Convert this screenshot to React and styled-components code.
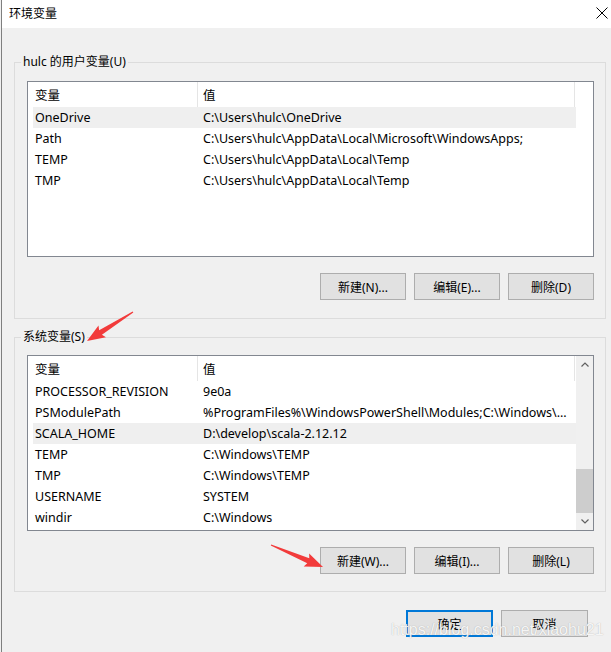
import styled, { createGlobalStyle } from "styled-components";

const GlobalStyle = createGlobalStyle`
  html, body {
    margin: 0;
    padding: 0;
    background: #f0f0f0;
  }
  body {
    font-family: "Noto Sans", "Noto Sans CJK SC", sans-serif;
    font-size: 12.5px;
    color: #000;
  }
  * {
    box-sizing: border-box;
  }
`;

// 用户变量
const userVars = [
  { name: "OneDrive", value: "C:\\Users\\hulc\\OneDrive", selected: true },
  { name: "Path", value: "C:\\Users\\hulc\\AppData\\Local\\Microsoft\\WindowsApps;" },
  { name: "TEMP", value: "C:\\Users\\hulc\\AppData\\Local\\Temp" },
  { name: "TMP", value: "C:\\Users\\hulc\\AppData\\Local\\Temp" },
];

// 系统变量
const systemVars = [
  { name: "PROCESSOR_REVISION", value: "9e0a" },
  { name: "PSModulePath", value: "%ProgramFiles%\\WindowsPowerShell\\Modules;C:\\Windows\\..." },
  { name: "SCALA_HOME", value: "D:\\develop\\scala-2.12.12", selected: true },
  { name: "TEMP", value: "C:\\Windows\\TEMP" },
  { name: "TMP", value: "C:\\Windows\\TEMP" },
  { name: "USERNAME", value: "SYSTEM" },
  { name: "windir", value: "C:\\Windows" },
];

// 红色箭头 (tail -> tip)
const arrowShape = (x1, y1, x2, y2) => {
  const dx = x2 - x1;
  const dy = y2 - y1;
  const len = Math.sqrt(dx * dx + dy * dy);
  const deg = (Math.atan2(dy, dx) * 180) / Math.PI;
  const points = `0,-0.6 ${len - 16},-2.6 ${len - 18},-7 ${len},0 ${len - 18},7 ${len - 16},2.6 0,0.6`;
  return { points, transform: `translate(${x1} ${y1}) rotate(${deg})` };
};

const VarList = ({ rows, scroll }) => (
  <ListView>
    <ListContent>
      <HeaderRow>
        <HeaderCell>变量</HeaderCell>
        <HeaderCell $value>值</HeaderCell>
      </HeaderRow>
      {rows.map((r) => (
        <Row key={r.name} $selected={r.selected}>
          <Cell>{r.name}</Cell>
          <Cell $value>{r.value}</Cell>
        </Row>
      ))}
    </ListContent>
    {scroll ? (
      <Scrollbar>
        <ScrollButton>
          <svg width="8" height="5" viewBox="0 0 8 5">
            <polyline points="0.5,4.5 4,1 7.5,4.5" fill="none" stroke="#606060" strokeWidth="1.2" />
          </svg>
        </ScrollButton>
        <Track>
          <Thumb />
        </Track>
        <ScrollButton>
          <svg width="8" height="5" viewBox="0 0 8 5">
            <polyline points="0.5,0.5 4,4 7.5,0.5" fill="none" stroke="#606060" strokeWidth="1.2" />
          </svg>
        </ScrollButton>
      </Scrollbar>
    ) : (
      <ScrollSpace />
    )}
  </ListView>
);

const App = () => {
  const a1 = arrowShape(133, 312, 87, 341);
  const a2 = arrowShape(271, 545, 323, 567);

  return (
    <>
      <GlobalStyle />
      <Window>
        <TitleBar>
          <Title>环境变量</Title>
          <svg width="12" height="12" viewBox="0 0 12 12">
            <path d="M0.5 0.5 L11.5 11.5 M11.5 0.5 L0.5 11.5" stroke="#000" strokeWidth="1" />
          </svg>
        </TitleBar>

        <Body>
          <Group $top={11} $bottom={18}>
            <Legend>hulc 的用户变量(U)</Legend>
            <VarList rows={userVars} />
            <ButtonRow>
              <Button>新建(N)...</Button>
              <Button>编辑(E)...</Button>
              <Button>删除(D)</Button>
            </ButtonRow>
          </Group>

          <Group $top={10} $bottom={17} $gap>
            <Legend>系统变量(S)</Legend>
            <VarList rows={systemVars} scroll />
            <ButtonRow>
              <Button>新建(W)...</Button>
              <Button>编辑(I)...</Button>
              <Button>删除(L)</Button>
            </ButtonRow>
          </Group>

          <Footer>
            <DialogButton $primary>确定</DialogButton>
            <DialogButton>取消</DialogButton>
          </Footer>
        </Body>

        <Overlay width="611" height="652" viewBox="0 0 611 652">
          <polygon points={a1.points} transform={a1.transform} fill="#f23b3b" />
          <polygon points={a2.points} transform={a2.transform} fill="#f23b3b" />
        </Overlay>
        <Watermark>https://blog.csdn.net/xiaohu21</Watermark>
      </Window>
    </>
  );
};

// 窗口
const Window = styled.div`
  position: relative;
  width: 610px;
  height: 652px;
  margin-left: 1px;
  border-left: 1px solid #7f7f7f;
  background: #f0f0f0;
  display: flex;
  flex-direction: column;
  overflow: hidden;
`;

const TitleBar = styled.div`
  height: 28px;
  background: #fff;
  display: flex;
  align-items: center;
  justify-content: space-between;
  padding: 0 3px 2px 7px;
`;

const Title = styled.span`
  font-size: 12px;
`;

const Body = styled.div`
  flex: 1;
  padding: 26px 5px 0 12px;
  display: flex;
  flex-direction: column;
`;

// 分组框
const Group = styled.fieldset`
  margin: ${(p) => (p.$gap ? "10px" : "0")} 0 0 0;
  min-width: 0;
  border: 1px solid #dcdcdc;
  padding: ${(p) => p.$top}px 11px ${(p) => p.$bottom}px 12px;
`;

const Legend = styled.legend`
  padding: 0 2px;
  margin-left: -6px;
  line-height: 16px;
  font-size: 12px;
`;

// 列表
const ListView = styled.div`
  height: 176px;
  border: 1px solid #828790;
  background: #fff;
  display: flex;
`;

const ListContent = styled.div`
  flex: 1;
  padding-left: 5px;
  overflow: hidden;
`;

const HeaderRow = styled.div`
  display: grid;
  grid-template-columns: 165px 377px;
  height: 25px;
`;

const HeaderCell = styled.div`
  display: flex;
  align-items: center;
  padding-left: ${(p) => (p.$value ? "5px" : "2px")};
  border-right: 1px solid #e5e5e5;
`;

const Row = styled.div`
  display: grid;
  grid-template-columns: 165px 377px;
  height: 21px;
  line-height: 21px;
  background: ${(p) => (p.$selected ? "#efefef" : "transparent")};
`;

const Cell = styled.div`
  padding-left: ${(p) => (p.$value ? "5px" : "2px")};
  white-space: nowrap;
  overflow: hidden;
`;

const ScrollSpace = styled.div`
  width: 17px;
`;

const Scrollbar = styled.div`
  width: 17px;
  background: #f0f0f0;
  display: flex;
  flex-direction: column;
`;

const ScrollButton = styled.div`
  height: 17px;
  display: flex;
  align-items: center;
  justify-content: center;
`;

const Track = styled.div`
  flex: 1;
  display: flex;
  flex-direction: column;
  justify-content: flex-end;
`;

const Thumb = styled.div`
  height: 44px;
  background: #cdcdcd;
`;

// 按钮
const ButtonRow = styled.div`
  display: flex;
  justify-content: flex-end;
  gap: 8px;
  margin-top: 16px;
`;

const Button = styled.button`
  width: 86px;
  height: 27px;
  padding: 0;
  background: #e1e1e1;
  border: 1px solid #adadad;
  font: inherit;
  font-size: 12px;
  color: #000;
`;

const Footer = styled.div`
  display: flex;
  justify-content: flex-end;
  gap: 8px;
  margin-top: 18px;
  padding-right: 18px;
`;

const DialogButton = styled(Button)`
  width: 87px;
  border: ${(p) => (p.$primary ? "2px solid #0078d7" : "1px solid #adadad")};
`;

// 标注层
const Overlay = styled.svg`
  position: absolute;
  left: -2px;
  top: 0;
  pointer-events: none;
`;

const Watermark = styled.div`
  position: absolute;
  left: 389px;
  top: 621px;
  font-family: "Liberation Sans", Arial, sans-serif;
  font-size: 16px;
  color: rgba(255, 255, 255, 0.9);
  text-shadow: 0 0 1px rgba(120, 120, 120, 0.6);
  pointer-events: none;
  white-space: nowrap;
`;

export default App;
